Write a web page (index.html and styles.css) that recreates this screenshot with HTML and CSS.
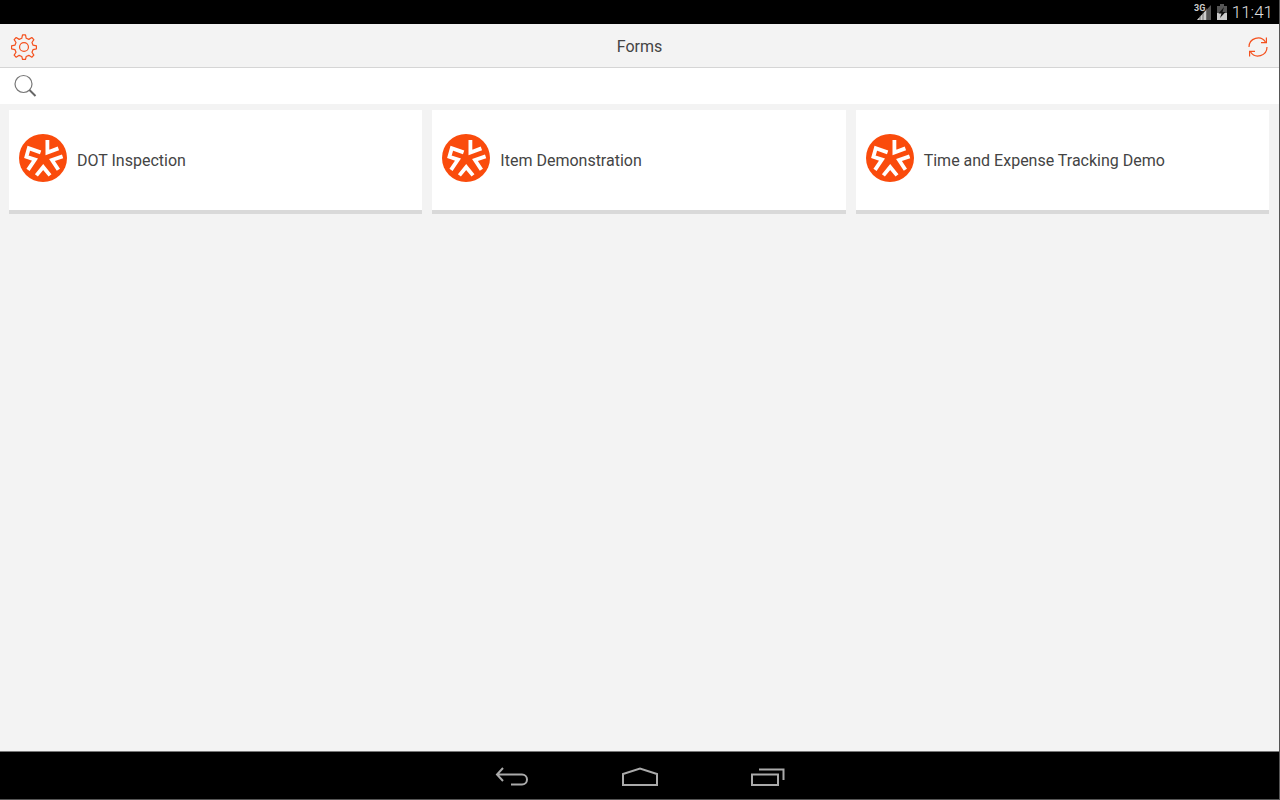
FILE: index.html
```html
<!doctype html>
<html lang="en">
  <head>
    <meta charset="utf-8">
    <title>Forms</title>
    <link rel="stylesheet" href="styles.css">
  </head>
  <body>
    <!-- shared logo, used by every form card -->
    <svg class="symbols" aria-hidden="true">
      <symbol id="logo" viewBox="0 0 48 48">
        <circle cx="24" cy="24" r="24" fill="#fa4b0c" />
        <g fill="none" stroke="#fff" stroke-width="3.8">
          <path d="M28.400 6v12.600l11-4.200" />
          <path d="M21.600 18.400L9.800 14.200L7.400 22.800L16 25.600L9 35.800" />
          <path d="M17.400 41.400L24.200 33L31 41.400" />
          <path d="M43.600 22.400L33 26L39.400 35.800" />
        </g>
      </symbol>
    </svg>

    <div class="status-bar">
      <svg class="signal" width="18" height="18" viewBox="0 0 18 18">
        <path d="M3 17L17 2v15z" fill="#555" />
        <path d="M3 17L13 6v11z" fill="#ccc" />
        <path d="M6 17v-5M9 17V8M12.500 17V5" stroke="#333" stroke-width=".6" />
        <text x="0" y="8">3G</text>
      </svg>
      <svg width="12" height="18" viewBox="0 0 12 18">
        <path d="M1 3h3V1h4v2h3v14H1z" fill="#555" />
        <path d="M1 10h10v7H1z" fill="#ccc" />
        <path d="M8 4L2.500 10.500h3L4 15l5.500-6h-3z" fill="#111" />
      </svg>
      <span class="clock">11:41</span>
    </div>

    <main class="app">
      <header class="title-bar">
        <button class="icon-button" type="button" aria-label="Settings">
          <svg width="26" height="26" viewBox="0 0 28 28">
            <g fill="none" stroke="#f4511e" stroke-width="1.300" stroke-linejoin="round">
              <circle cx="14" cy="14" r="4.800" />
              <path d="M12.400 1h3.200l.8 3.600 2.800 1.200 3.200-2 2.200 2.200-2 3.200 1.200 2.800 3.600.8v3.200l-3.600.8-1.200 2.800 2 3.200-2.200 2.200-3.200-2-2.800 1.200-.8 3.200h-3.200l-.8-3.200-2.800-1.200-3.200 2-2.200-2.200 2-3.200-1.200-2.800-3.600-.8v-3.200l3.600-.8 1.200-2.800-2-3.200 2.200-2.200 3.200 2 2.800-1.200z" />
            </g>
          </svg>
        </button>
        <h1>Forms</h1>
        <button class="icon-button" type="button" aria-label="Refresh">
          <svg width="20" height="20" viewBox="0 0 20 20">
            <g fill="none" stroke="#f4511e" stroke-width="1.200">
              <path d="M1 10A9 9 0 0 1 17.600 5.200" />
              <path d="M19 10A9 9 0 0 1 2.400 14.800" />
              <path d="M18.400 .6v5h-5.400" />
              <path d="M1.600 19.400v-5h5.400" />
            </g>
          </svg>
        </button>
      </header>

      <label class="search">
        <svg width="24" height="24" viewBox="0 0 24 24">
          <circle cx="9.500" cy="10" r="8.500" fill="none" stroke="#777" stroke-width="1.200" />
          <path d="M15.500 16l6 6" stroke="#666" stroke-width="2" />
        </svg>
        <input type="search" aria-label="Search forms">
      </label>

      <div class="cards">
        <a class="card" href="#dot">
          <svg class="logo"><use href="#logo" /></svg>
          <span>DOT Inspection</span>
        </a>
        <a class="card" href="#item">
          <svg class="logo"><use href="#logo" /></svg>
          <span>Item Demonstration</span>
        </a>
        <a class="card" href="#expense">
          <svg class="logo"><use href="#logo" /></svg>
          <span>Time and Expense Tracking Demo</span>
        </a>
      </div>
    </main>

    <nav class="nav-bar">
      <button type="button" aria-label="Back">
        <svg width="34" height="20" viewBox="0 0 34 20">
          <path d="M8 1L2 7.500L8 14M2 7.500h25a5 5 0 0 1 0 10H16" />
        </svg>
      </button>
      <button type="button" aria-label="Home">
        <svg width="38" height="20" viewBox="0 0 38 20">
          <path d="M2 18V7L19 1.500L36 7v11z" />
        </svg>
      </button>
      <button type="button" aria-label="Recent apps">
        <svg width="34" height="20" viewBox="0 0 34 20">
          <path d="M1 7.500h26v10.500H1zM8 2.500h24.500V13" />
        </svg>
      </button>
    </nav>
  </body>
</html>
```

FILE: styles.css
```css
* {
  box-sizing: border-box;
}

body {
  display: flex;
  flex-direction: column;
  min-height: 100vh;
  margin: 0;
  font-family: Roboto, "Noto Sans", sans-serif;
  font-size: 16px;
  color: #444;
  background-color: #f3f3f3;
  border-right: 1px solid #555;
}

button {
  padding: 0;
  border: 0;
  background: none;
  cursor: pointer;
}

svg {
  display: block;
}

.symbols {
  position: absolute;
  width: 0;
  height: 0;
}

/* Android status bar */
.status-bar {
  display: flex;
  align-items: center;
  justify-content: flex-end;
  gap: 4px;
  height: 24px;
  padding-right: 6px;
  background-color: #000;
}

.signal text {
  font-size: 9px;
  font-weight: bold;
  fill: #ccc;
}

.clock {
  font-size: 17px;
  font-weight: 300;
  line-height: 24px;
  color: #ddd;
}

.app {
  flex: 1;
}

.title-bar {
  display: flex;
  align-items: center;
  justify-content: space-between;
  height: 44px;
  padding: 2px 11px 0;
  border-bottom: 1px solid #d5d5d5;
}

.title-bar h1 {
  margin: 0;
  font-size: 16px;
  font-weight: 400;
}

.icon-button {
  display: flex;
  width: 28px;
}

.icon-button:last-child {
  justify-content: flex-end;
}

.search {
  display: flex;
  align-items: center;
  gap: 10px;
  height: 36px;
  padding: 0 14px;
  background-color: #fff;
}

.search input {
  flex: 1;
  border: 0;
  outline: 0;
  font: inherit;
  background: none;
}

.cards {
  display: grid;
  grid-template-columns: repeat(3, 1fr);
  gap: 10px;
  padding: 6px 10px 10px 9px;
}

.card {
  display: flex;
  align-items: center;
  gap: 10px;
  height: 104px;
  padding: 0 10px 4px;
  color: #444;
  text-decoration: none;
  background-color: #fff;
  border-bottom: 4px solid #d9d9d9;
}

.card span {
  padding-top: 4px;
}

.logo {
  flex: none;
  width: 48px;
  height: 48px;
}

/* Android navigation buttons */
.nav-bar {
  display: flex;
  align-items: center;
  justify-content: center;
  gap: 92px;
  height: 49px;
  padding-top: 2px;
  background-color: #000;
  border-top: 1px solid #777;
  border-bottom: 1px solid #555;
}

.nav-bar path {
  fill: none;
  stroke: #aaa;
  stroke-width: 2;
}
```
